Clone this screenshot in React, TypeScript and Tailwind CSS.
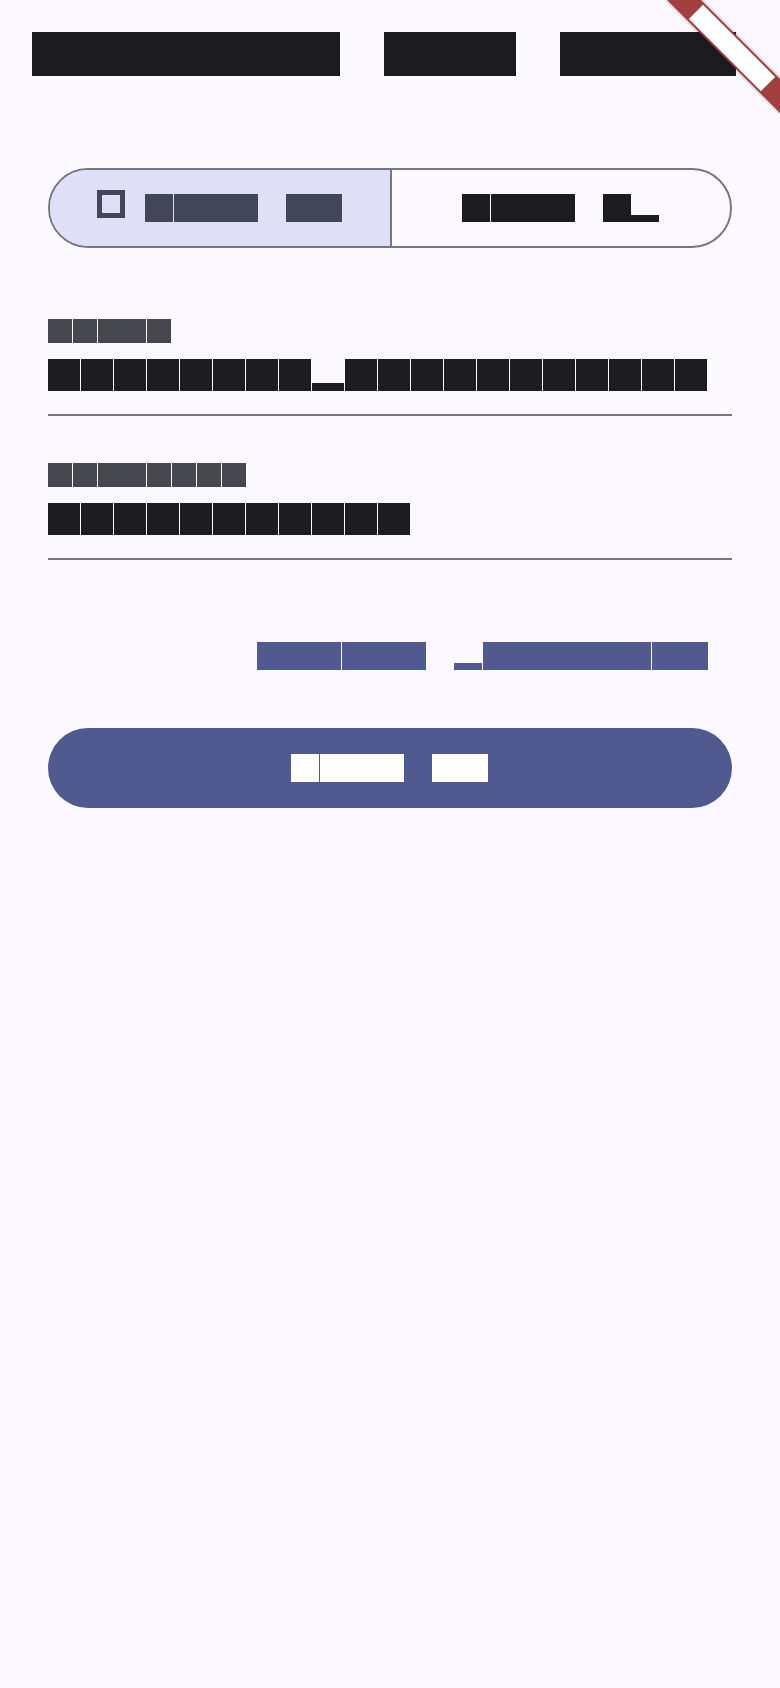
import clsx from 'clsx';

type GlyphProps = { text: string; cell: string; fill: string; bar: string };

// each character drawn as a square cell, like the test font in the reference
function Glyphs({ text, cell, fill, bar }: GlyphProps) {
  return (
    <span className="flex items-start">
      {Array.from(text).map((ch, i) => {
        if (ch === ' ') return <span key={i} className={clsx('block shrink-0', cell)}> </span>;
        if (ch === 'p')
          return (
            <span key={i} className={clsx('flex shrink-0 flex-col justify-end', cell)}>
              <span className={clsx('block w-full overflow-hidden text-center text-[6px] leading-[6px]', bar, fill)}>{ch}</span>
            </span>
          );
        return (
          <span key={i} className={clsx('block shrink-0 overflow-hidden text-center text-[12px] leading-none', cell, fill)}>
            {ch}
          </span>
        );
      })}
    </span>
  );
}

function Field({ label, value }: { label: string; value: string }) {
  return (
    <div className="flex flex-col">
      <Glyphs text={label} cell="w-[24px] h-[24px] mr-[0.8px]" fill="bg-[#46464f] text-[#46464f]" bar="h-[6px]" />
      <div className="mt-[16px]">
        <Glyphs text={value} cell="w-[32px] h-[32px] mr-[1px]" fill="bg-[#1c1b20] text-[#1c1b20]" bar="h-[8px]" />
      </div>
      <div className="mt-[23px] h-[2px] bg-[#777680]" />
    </div>
  );
}

export default function App() {
  return (
    <div className="relative min-h-screen overflow-hidden bg-[#fbf8ff] font-['Liberation_Sans',sans-serif]">
      <div className="px-[32px] pt-[32px]">
        <Glyphs text="Welcome new user" cell="w-[44px] h-[44px]" fill="bg-[#1c1b20] text-[#1c1b20]" bar="h-[11px]" />
      </div>

      <div className="px-[48px]">
        <div className="mt-[92px] grid h-[80px] grid-cols-2 overflow-hidden rounded-full border-2 border-[#777680]">
          <div className="flex items-center justify-center gap-[20px] bg-[#dfe0f8]">
            <span className="mb-[8px] block h-[28px] w-[28px] border-[5px] border-[#434659]" />
            <Glyphs text="Sign in" cell="w-[28px] h-[28px] mr-[0.2px]" fill="bg-[#434659] text-[#434659]" bar="h-[7px]" />
          </div>
          <div className="flex items-center justify-center border-l-2 border-[#777680]">
            <Glyphs text="Sign up" cell="w-[28px] h-[28px] mr-[0.2px]" fill="bg-[#1c1b20] text-[#1c1b20]" bar="h-[7px]" />
          </div>
        </div>

        <div className="mt-[71px]">
          <Field label="Email" value="kim@example.mail.com" />
        </div>
        <div className="mt-[47px]">
          <Field label="Password" value="•••••••••••" />
        </div>

        <div className="mt-[82px] flex justify-end pr-[24px]">
          <Glyphs text="Forgot password?" cell="w-[28px] h-[28px] mr-[0.2px]" fill="bg-[#505a91] text-[#505a91]" bar="h-[7px]" />
        </div>

        <button className="mt-[58px] flex h-[80px] w-full items-center justify-center rounded-full bg-[#505a91]">
          <Glyphs text="Sign in" cell="w-[28px] h-[28px] mr-[0.2px]" fill="bg-white text-white" bar="h-[7px]" />
        </button>
      </div>

      <div className="absolute left-[652px] top-[36px] flex h-[24px] w-[160px] rotate-45 items-center justify-center bg-[#a23e3e] shadow-[0_0_4px_rgba(0,0,0,0.35)]">
        <span className="block h-[20px] w-[102px] overflow-hidden bg-white text-center text-[16px] font-bold leading-[20px] text-white">
          DEBUG
        </span>
      </div>
    </div>
  );
}
